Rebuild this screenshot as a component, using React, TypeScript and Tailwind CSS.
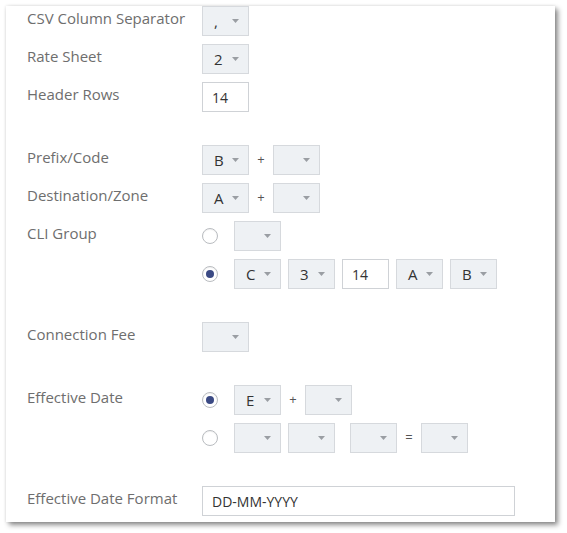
import React from "react";

const Caret = () => (
  <svg width="7" height="4" viewBox="0 0 7 4" className="shrink-0">
    <path d="M0 0 L7 0 L3.5 4 Z" fill="#9a9ea3" />
  </svg>
);

function Select({ value = "", className = "" }: { value?: string; className?: string }) {
  return (
    <div
      className={`flex items-center justify-between h-[30px] w-[47px] pl-[11px] pr-[9px] bg-[#eef1f4] border border-[#d6d9dd] text-[15px] text-[#333] ${className}`}
    >
      <span>{value}</span>
      <Caret />
    </div>
  );
}

function TextBox({ value, className = "" }: { value: string; className?: string }) {
  return (
    <div
      className={`flex items-center h-[30px] px-[9px] bg-white border border-[#cfd2d6] text-[14px] text-[#333] ${className}`}
    >
      {value}
    </div>
  );
}

function Radio({ checked = false }: { checked?: boolean }) {
  return (
    <div className="w-[32px] flex items-center">
      <div className="w-[16px] h-[16px] rounded-full border border-[#b9bcc0] bg-white flex items-center justify-center shadow-[inset_0_1px_1px_rgba(0,0,0,0.06)]">
        {checked && <div className="w-[8px] h-[8px] rounded-full bg-[#3b4a84]" />}
      </div>
    </div>
  );
}

function Row({ label, children }: { label?: string; children: React.ReactNode }) {
  return (
    <div className="flex">
      <div className="w-[175px] shrink-0 pt-[1px] text-[15px] leading-[22px] text-[#6e6e6e]">{label}</div>
      <div className="flex flex-col gap-[8px]">{children}</div>
    </div>
  );
}

const Line = ({ children }: { children: React.ReactNode }) => (
  <div className="flex items-center h-[30px]">{children}</div>
);

const Sign = ({ c }: { c: string }) => (
  <span className="w-[24px] text-center text-[13px] text-[#555]">{c}</span>
);

export default function App() {
  return (
    <div className="w-[567px] h-[533px] bg-white pl-[6px] pt-[6px]" style={{ fontFamily: '"Open Sans", "Liberation Sans", sans-serif' }}>
      <div className="w-[549px] h-[516px] bg-white shadow-[3px_3px_5px_rgba(0,0,0,0.45),0_0_3px_rgba(0,0,0,0.12)] pl-[21px]">
        <div className="flex flex-col gap-[8px]">
          <Row label="CSV Column Separator">
            <Line><Select value="," /></Line>
          </Row>
          <Row label="Rate Sheet">
            <Line><Select value="2" /></Line>
          </Row>
          <Row label="Header Rows">
            <Line><TextBox value="14" className="w-[47px]" /></Line>
          </Row>
        </div>

        <div className="flex flex-col gap-[8px] mt-[33px]">
          <Row label="Prefix/Code">
            <Line><Select value="B" /><Sign c="+" /><Select /></Line>
          </Row>
          <Row label="Destination/Zone">
            <Line><Select value="A" /><Sign c="+" /><Select /></Line>
          </Row>
          <Row label="CLI Group">
            <Line><Radio /><Select /></Line>
            <Line>
              <Radio checked />
              <Select value="C" />
              <Select value="3" className="ml-[7px]" />
              <TextBox value="14" className="w-[47px] ml-[7px]" />
              <Select value="A" className="ml-[7px]" />
              <Select value="B" className="ml-[7px]" />
            </Line>
          </Row>
        </div>

        <div className="mt-[33px]">
          <Row label="Connection Fee">
            <Line><Select /></Line>
          </Row>
        </div>

        <div className="mt-[33px]">
          <Row label="Effective Date">
            <Line><Radio checked /><Select value="E" /><Sign c="+" /><Select /></Line>
            <Line>
              <Radio />
              <Select />
              <Select className="ml-[7px]" />
              <Select className="ml-[15px]" />
              <Sign c="=" />
              <Select />
            </Line>
          </Row>
        </div>

        <div className="mt-[33px]">
          <Row label="Effective Date Format">
            <Line><TextBox value="DD-MM-YYYY" className="w-[313px]" /></Line>
          </Row>
        </div>
      </div>
    </div>
  );
}
